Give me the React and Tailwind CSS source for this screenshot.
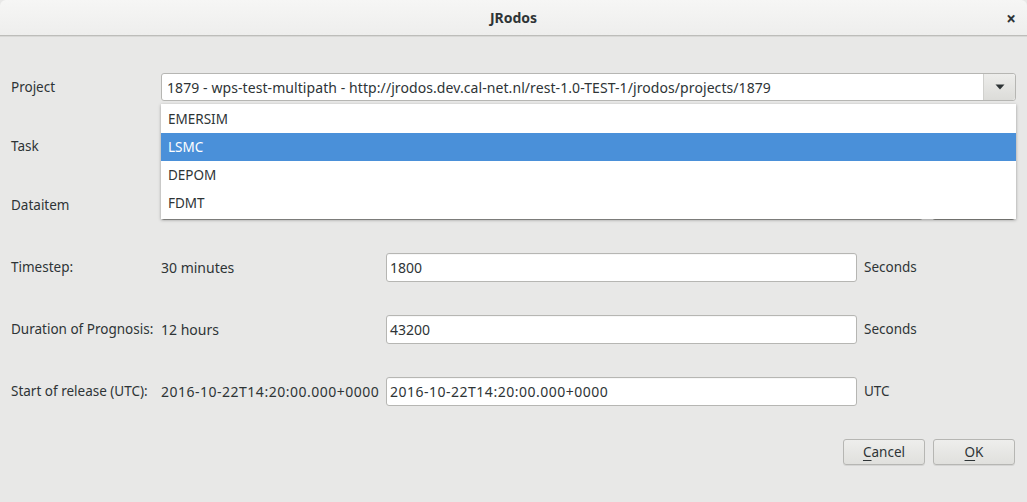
import React from "react";

const font = { fontFamily: '"Noto Sans", "Open Sans", sans-serif' };

function Input({ value, wide }) {
  return (
    <div className="h-[29px] w-[471px] rounded-[3px] border border-[#b6b6b3] bg-white flex items-center pl-[3px] text-[#2e3436] shadow-[inset_0_1px_0_rgba(0,0,0,0.03)]">
      <span className={wide ? "text-[14px] tracking-[0.5px]" : "text-[14px]"}>{value}</span>
    </div>
  );
}

function Button({ children }) {
  return (
    <div className="h-[26px] w-[82px] rounded-[3px] border border-[#b6b6b3] bg-gradient-to-b from-[#eeeeec] to-[#e0e0dd] flex items-center justify-center text-[#2e3436] shadow-[0_1px_0_rgba(0,0,0,0.08)]">
      {children}
    </div>
  );
}

function Arrow() {
  return (
    <svg width="10" height="6" viewBox="0 0 10 6">
      <path d="M0.5 0.5 L9.5 0.5 L5 5.5 Z" fill="#2e3436" />
    </svg>
  );
}

export default function App() {
  return (
    <div
      className="w-[1027px] h-[502px] bg-[#e8e8e7] text-[13.5px] text-[#2e3436] overflow-hidden flex flex-col"
      style={font}
    >
      {/* Title bar */}
      <div className="h-[36px] shrink-0 rounded-t-[6px] bg-gradient-to-b from-[#f6f6f5] to-[#eeeeed] border-b border-[#bdbdba] shadow-[0_1px_0_#d8d8d6] relative flex items-center justify-center">
        <span className="font-bold text-[14px] text-[#2e3436]">JRodos</span>
        <span className="absolute right-[11px] top-[6px] text-[17px] font-bold text-[#2e3436]">×</span>
      </div>

      {/* Body */}
      <div className="relative flex flex-col pl-[11px] pt-[37px]">
        {/* Project */}
        <div className="flex items-center h-[28px]">
          <div className="w-[150px]">Project</div>
          <div className="w-[855px] h-[28px] rounded-[3px] border border-[#b6b6b3] bg-white flex items-center">
            <div className="flex-1 pl-[5px] whitespace-nowrap overflow-hidden text-[14px] tracking-[0.08px]">
              1879 - wps-test-multipath - http://jrodos.dev.cal-net.nl/rest-1.0-TEST-1/jrodos/projects/1879
            </div>
            <div className="w-[32px] h-full border-l border-[#d0d0cd] bg-gradient-to-b from-[#ededeb] to-[#dcdcd9] flex items-center justify-center rounded-r-[3px]">
              <Arrow />
            </div>
          </div>
        </div>

        {/* Task */}
        <div className="flex items-center h-[28px] mt-[31px]">
          <div className="w-[150px]">Task</div>
          <div className="w-[855px] h-[28px] rounded-[3px] border border-[#b6b6b3] bg-white flex items-center">
            <div className="flex-1 pl-[5px]">LSMC</div>
            <div className="w-[32px] h-full bg-gradient-to-b from-[#ededeb] to-[#dcdcd9] flex items-center justify-center">
              <Arrow />
            </div>
          </div>
        </div>

        {/* Dataitem */}
        <div className="flex items-center h-[29px] mt-[31px]">
          <div className="w-[150px]">Dataitem</div>
          <div className="w-[762px] h-[29px] rounded-[3px] border border-[#9f9f9c] bg-white flex items-center">
            <div className="flex-1" />
            <div className="w-[31px] h-full bg-gradient-to-b from-[#ededeb] to-[#b0b0ad] flex items-center justify-center">
              <Arrow />
            </div>
          </div>
          <div className="ml-[9px] w-[83px] h-[29px] rounded-[3px] border border-[#8f8f8c] bg-[#e6e6e4]" />
        </div>

        {/* Timestep */}
        <div className="flex items-center h-[29px] mt-[33px]">
          <div className="w-[150px]">Timestep:</div>
          <div className="w-[225px] text-[14px]">30 minutes</div>
          <Input value="1800" />
          <div className="ml-[7px]">Seconds</div>
        </div>

        {/* Duration */}
        <div className="flex items-center h-[29px] mt-[33px]">
          <div className="w-[150px] whitespace-nowrap">Duration of Prognosis:</div>
          <div className="w-[225px] text-[14px]">12 hours</div>
          <Input value="43200" />
          <div className="ml-[7px]">Seconds</div>
        </div>

        {/* Start */}
        <div className="flex items-center h-[29px] mt-[33px]">
          <div className="w-[150px] whitespace-nowrap">Start of release (UTC):</div>
          <div className="w-[225px] whitespace-nowrap text-[14px] tracking-[0.5px]">2016-10-22T14:20:00.000+0000</div>
          <Input value="2016-10-22T14:20:00.000+0000" wide />
          <div className="ml-[7px]">UTC</div>
        </div>

        {/* Buttons */}
        <div className="flex justify-end gap-[8px] pr-[12px] mt-[33px]">
          <Button>
            <span><span className="underline underline-offset-[3px]">C</span>ancel</span>
          </Button>
          <Button>
            <span><span className="underline underline-offset-[3px]">O</span>K</span>
          </Button>
        </div>

        {/* Dropdown popup */}
        <div className="absolute left-[161px] top-[68px] w-[855px] bg-white shadow-[0_1px_3px_rgba(0,0,0,0.35)] py-[1px] flex flex-col">
          <div className="h-[28px] flex items-center pl-[7px]">EMERSIM</div>
          <div className="h-[28px] flex items-center pl-[7px] bg-[#4a90d9] text-white">LSMC</div>
          <div className="h-[28px] flex items-center pl-[7px]">DEPOM</div>
          <div className="h-[28px] flex items-center pl-[7px]">FDMT</div>
          <div className="h-[1px]" />
        </div>
      </div>
    </div>
  );
}
